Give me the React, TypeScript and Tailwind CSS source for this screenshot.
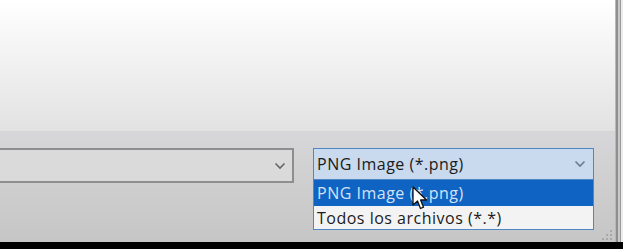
import React from 'react';

function Chevron({ className }: { className: string }) {
  return (
    <svg width="12" height="8" viewBox="0 0 12 8" className={className}>
      <path d="M1.5 1.5 L6 6 L10.5 1.5" fill="none" stroke="currentColor" strokeWidth="1.6" />
    </svg>
  );
}

function Cursor() {
  return (
    <svg width="16" height="25" viewBox="0 0 16 25" className="absolute left-[412px] top-[186px]">
      <path
        d="M1 1 L1 19 L5.5 15 L8.5 22.5 L11.5 21.2 L8.6 14 L14.5 14 Z"
        fill="#ffffff"
        stroke="#111111"
        strokeWidth="1.3"
        strokeLinejoin="round"
      />
    </svg>
  );
}

function Grip() {
  const dots = [
    [10, 1],
    [10, 5],
    [6, 5],
    [10, 9],
    [6, 9],
    [2, 9],
  ];
  return (
    <svg width="13" height="12" viewBox="0 0 13 12" className="absolute left-[600px] top-[229px]">
      {dots.map(([x, y], i) => (
        <rect key={i} x={x} y={y} width="2" height="2" fill="#a9a9a9" />
      ))}
    </svg>
  );
}

export default function App() {
  return (
    <div
      className="relative w-[623px] h-[249px] overflow-hidden flex flex-col bg-black"
      style={{ fontFamily: '"Open Sans", "Noto Sans", sans-serif' }}
    >
      <div className="flex h-[242px]">
        <div className="flex-1 flex flex-col">
          <div className="h-[131px] bg-gradient-to-b from-[#ffffff] to-[#e2e2e2]" />
          <div className="flex-1 border-t border-[#d5d4d7] bg-gradient-to-b from-[#d7d6d8] to-[#c6c6c6] pt-[16px] flex items-start">
            <div className="ml-[-10px] w-[304px] h-[35px] border-2 border-[#8e8e8e] bg-[#dadada] flex items-center justify-end pr-[6px]">
              <Chevron className="text-[#666666]" />
            </div>
            <div className="ml-[19px] w-[281px] flex flex-col border border-[#4f87c4] text-[16px] tracking-[0.5px]">
              <div className="h-[31px] bg-[#c9daee] flex items-center justify-between pl-[3px] pr-[7px] text-[#1b1b1b] border-b border-[#4f87c4]">
                <span>PNG Image (*.png)</span>
                <Chevron className="text-[#6b7b90]" />
              </div>
              <div className="h-[26px] bg-[#0f63c3] flex items-center pl-[3px] text-[#d3e2f6] leading-none">
                PNG Image (*.png)
              </div>
              <div className="h-[23px] bg-[#f3f3f3] flex items-center pl-[3px] text-[#1b1b1b] leading-none">
                Todos los archivos (*.*)
              </div>
            </div>
          </div>
        </div>
        <div className="w-[8px] flex">
          <div className="w-[1px] bg-[#b8b8b8]" />
          <div className="w-[2px] bg-[#8f8f8f]" />
          <div className="w-[2px] bg-[#c9c9c9]" />
          <div className="w-[1px] bg-[#9a9a9a]" />
          <div className="flex-1 bg-[#ececec]" />
        </div>
      </div>
      <Cursor />
      <Grip />
    </div>
  );
}
